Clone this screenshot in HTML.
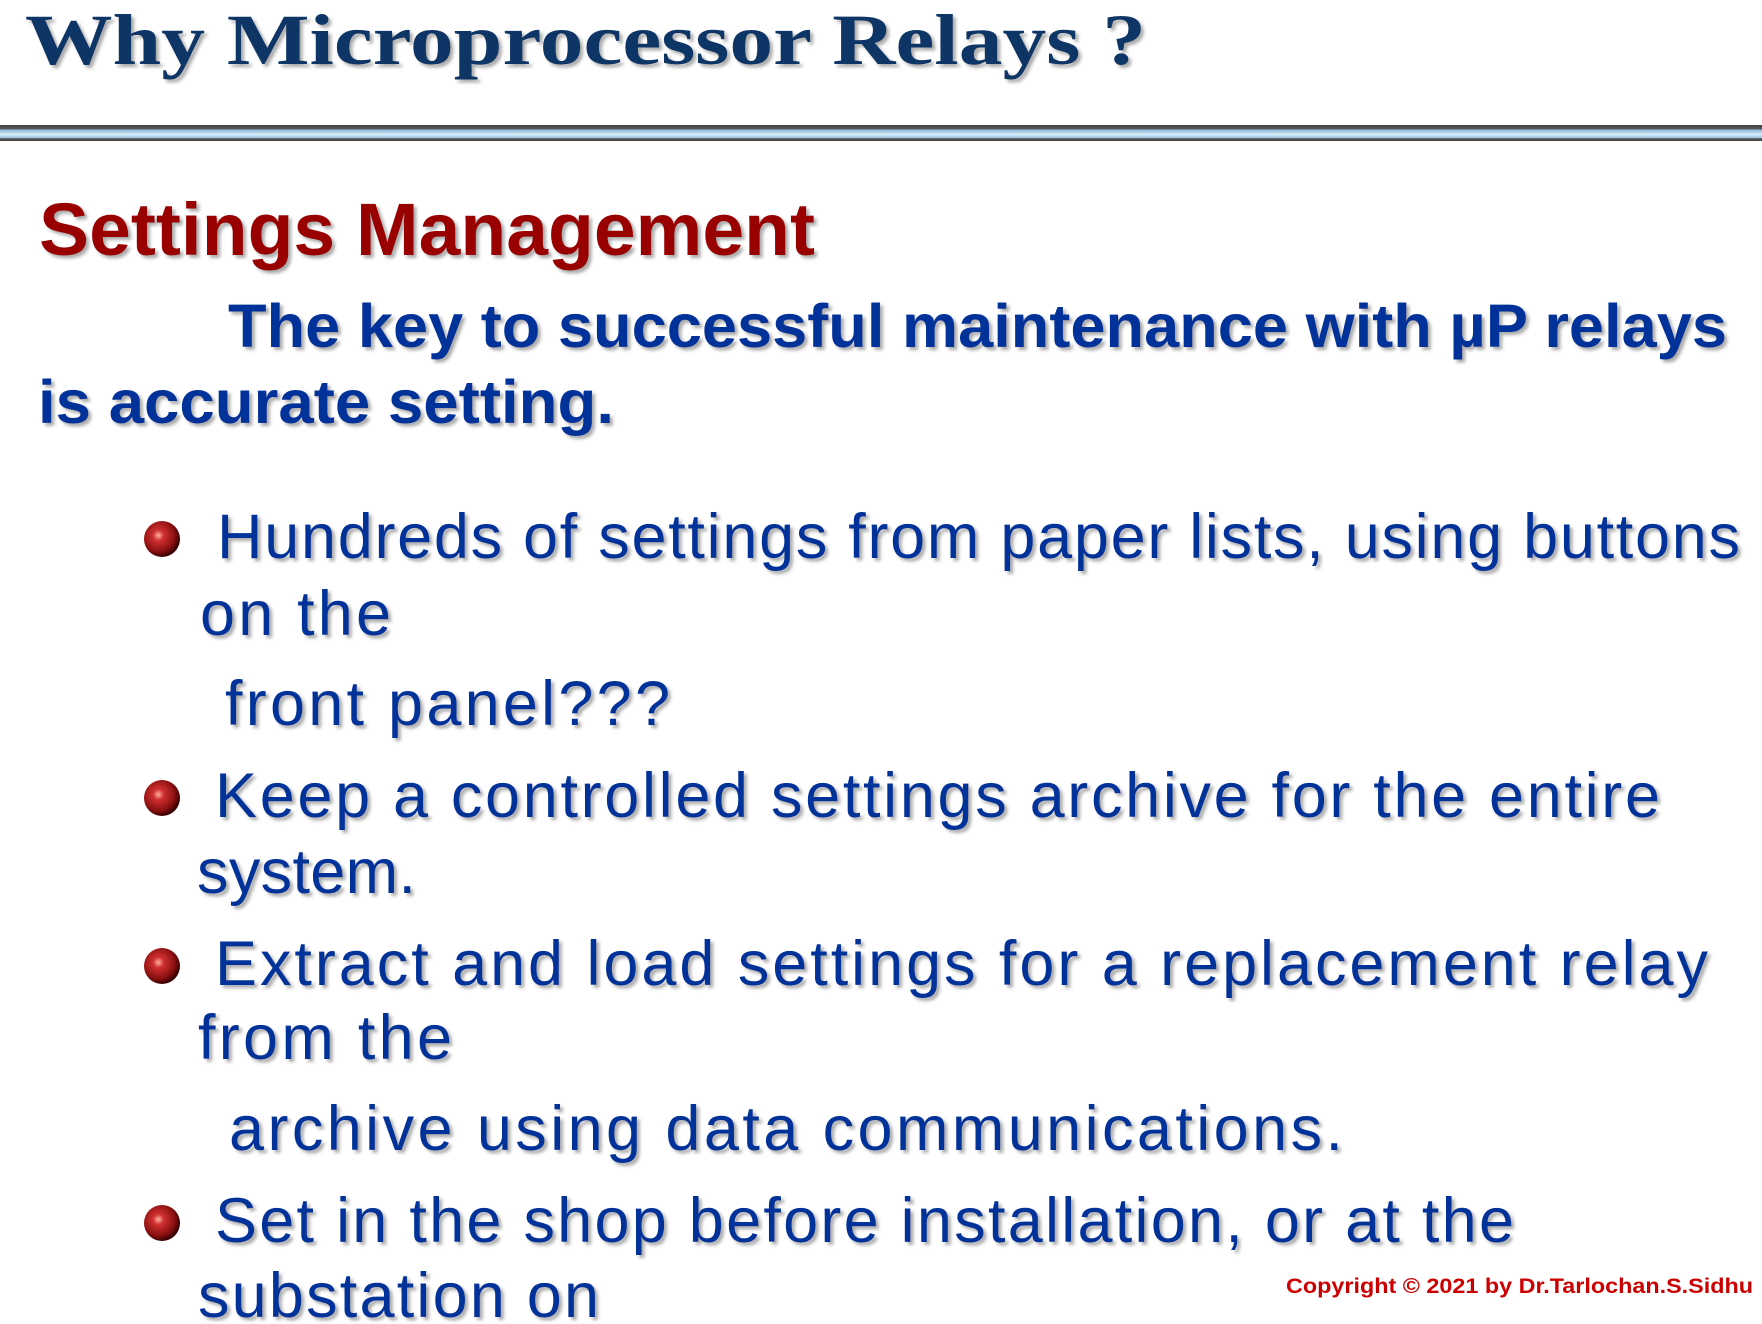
<!DOCTYPE html>
<html><head><meta charset="utf-8"><style>
html,body{margin:0;padding:0;background:#fff;width:1762px;height:1324px;overflow:hidden}
svg{display:block}
.s{font-family:"Liberation Sans",Arial,sans-serif}
</style></head><body>
<svg width="1762" height="1324" viewBox="0 0 1762 1324" xmlns="http://www.w3.org/2000/svg">
<defs>
<filter id="sh" x="-5%" y="-20%" width="110%" height="150%"><feDropShadow dx="3" dy="3" stdDeviation="1.5" flood-color="#888" flood-opacity="0.7"/></filter>
<linearGradient id="rule" x1="0" y1="0" x2="0" y2="1">
<stop offset="0" stop-color="#444"/><stop offset="0.25" stop-color="#555"/><stop offset="0.3" stop-color="#8fb4d6"/><stop offset="0.6" stop-color="#d4ecfa"/><stop offset="0.8" stop-color="#9bbcd8"/><stop offset="0.85" stop-color="#555"/><stop offset="1" stop-color="#444"/>
</linearGradient>
<radialGradient id="ball" cx="0.4" cy="0.4" r="0.6">
<stop offset="0" stop-color="#ffb0a0"/><stop offset="0.25" stop-color="#d03030"/><stop offset="0.75" stop-color="#8a1010"/><stop offset="1" stop-color="#3a0000"/>
</radialGradient>
</defs>
<text x="25" y="64" font-family="Liberation Serif,serif" font-weight="bold" font-size="72" fill="#0a3566" textLength="1121" lengthAdjust="spacingAndGlyphs" filter="url(#sh)">Why Microprocessor Relays ?</text>
<rect x="0" y="125" width="1762" height="16" fill="url(#rule)"/>
<g class="s" filter="url(#sh)">
<text x="39" y="255" font-weight="bold" font-size="74" fill="#990000" textLength="776" lengthAdjust="spacingAndGlyphs">Settings Management</text>
<text x="228" y="347" font-weight="bold" font-size="61" fill="#003399" textLength="1499" lengthAdjust="spacingAndGlyphs">The key to successful maintenance with µP relays</text>
<text x="38" y="423" font-weight="bold" font-size="61" fill="#003399" textLength="576" lengthAdjust="spacingAndGlyphs">is accurate setting.</text>
<g font-size="63" fill="#003399">
<text x="217" y="558" textLength="1523" lengthAdjust="spacing">Hundreds of settings from paper lists, using buttons</text>
<text x="200" y="635" textLength="191" lengthAdjust="spacing">on the</text>
<text x="225" y="725" textLength="445" lengthAdjust="spacing">front panel???</text>
<text x="215" y="817" textLength="1445" lengthAdjust="spacing">Keep a controlled settings archive for the entire</text>
<text x="197" y="893" textLength="219" lengthAdjust="spacing">system.</text>
<text x="215" y="985" textLength="1493" lengthAdjust="spacing">Extract and load settings for a replacement relay</text>
<text x="198" y="1059" textLength="254" lengthAdjust="spacing">from the</text>
<text x="229" y="1150" textLength="1114" lengthAdjust="spacing">archive using data communications.</text>
<text x="215" y="1242" textLength="1299" lengthAdjust="spacing">Set in the shop before installation, or at the</text>
<text x="198" y="1317" textLength="401" lengthAdjust="spacing">substation on</text>
</g>
</g>
<g>
<circle cx="162" cy="539" r="18" fill="url(#ball)"/>
<circle cx="162" cy="798" r="18" fill="url(#ball)"/>
<circle cx="162" cy="966" r="18" fill="url(#ball)"/>
<circle cx="162" cy="1223" r="18" fill="url(#ball)"/>
</g>
<text class="s" x="1286" y="1293" font-weight="bold" font-size="21" fill="#cc0000" textLength="467" lengthAdjust="spacingAndGlyphs">Copyright © 2021 by Dr.Tarlochan.S.Sidhu</text>
</svg>
</body></html>
